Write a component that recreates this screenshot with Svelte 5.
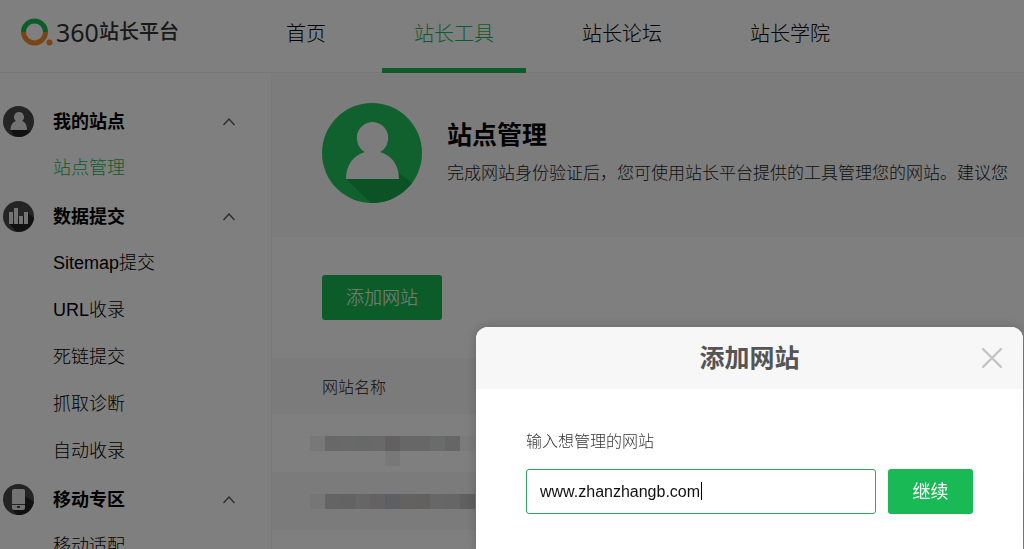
<script>
  let site = $state('www.zhanzhangb.com');
  let showDialog = $state(true);

  const tabs = [
    { label: '首页' },
    { label: '站长工具', active: true },
    { label: '站长论坛' },
    { label: '站长学院' },
  ];

  const menu = [
    { title: '我的站点', icon: 'user', items: [{ label: '站点管理', active: true }] },
    {
      title: '数据提交',
      icon: 'chart',
      items: [
        { label: 'Sitemap提交' },
        { label: 'URL收录' },
        { label: '死链提交' },
        { label: '抓取诊断' },
        { label: '自动收录' },
      ],
    },
    { title: '移动专区', icon: 'phone', items: [{ label: '移动适配' }] },
  ];

  // masked site names, one shade per block
  const masks = [
    ['#f0f0f0', '#d0d0d0', '#d2d2d2', '#ced2d2', '#d2d2d2', '#c4c0c2', '#cecece', '#cecece', '#d4d6d6', '#cccccc', '#f6f6f6'],
    ['#ececec', '#c8c8c8', '#c6c6c6', '#cccccc', '#c8c4c4', '#bcbec4', '#c6c4c2', '#c4c2be', '#cecece', '#cccccc', '#c0c0c0'],
  ];
</script>

<div class="page">
  <header>
    <a class="logo" href="#home">
      <svg width="33" height="30" viewBox="0 0 33 30" aria-hidden="true">
        <path d="M3.500 15a11 11 0 0 1 22 0" fill="none" stroke="#19b955" stroke-width="5" />
        <path d="M3.500 15a11 11 0 0 0 22 0" fill="none" stroke="#f08a2c" stroke-width="5" />
        <circle cx="29.500" cy="25.500" r="3" fill="#f08a2c" />
      </svg>
      <span class="num">360</span><span class="name">站长平台</span>
    </a>
    <nav>
      {#each tabs as tab}
        <a href="#tab" class:active={tab.active}>{tab.label}</a>
      {/each}
    </nav>
  </header>

  <div class="body">
    <aside>
      {#each menu as group}
        <section>
          <button class="group">
            <svg class="icon" width="31" height="31" viewBox="0 0 31 31" aria-hidden="true">
              <circle cx="15.500" cy="15.500" r="15.500" fill="#484848" />
              {#if group.icon === 'user'}
                <path d="M7.500 24h17l3.500 1a15.500 15.500 0 0 1-17 5z" fill="#222" />
                <path d="M16 6a5 5 0 0 1 3 9c3.500 1 5 4.500 5 9H7.500c0-4.500 2-8 5.500-9a5 5 0 0 1 3-9z" fill="#e6e6e6" />
              {:else if group.icon === 'chart'}
                <path d="M6.500 23 25 12l6 5a15.500 15.500 0 0 1-18 13.500z" fill="#222" />
                <path d="M6 11h4v12H6zM11 7h4v16h-4zM16 15h4v8h-4zM21 11h4v12h-4z" fill="#e6e6e6" />
              {:else}
                <path d="m22 12 9 6a15.500 15.500 0 0 1-17 13l-4-5z" fill="#222" />
                <rect x="9" y="5" width="13" height="21" rx="2" fill="#e6e6e6" />
                <path d="M9 20.500h13" stroke="#484848" />
                <rect x="14" y="22" width="3" height="2" fill="#484848" />
              {/if}
            </svg>
            <span>{group.title}</span>
            <svg class="arrow" width="12" height="8" viewBox="0 0 12 8" aria-hidden="true">
              <path d="m.5 7 5.500-6 5.500 6" fill="none" stroke="#555" stroke-width="1.300" />
            </svg>
          </button>
          {#each group.items as item}
            <a href="#menu" class:active={item.active}>{item.label}</a>
          {/each}
        </section>
      {/each}
    </aside>

    <main>
      <div class="hero">
        <svg width="100" height="100" viewBox="0 0 100 100" aria-hidden="true">
          <defs>
            <clipPath id="disc"><circle cx="50" cy="50" r="50" /></clipPath>
          </defs>
          <g clip-path="url(#disc)">
            <rect width="100" height="100" fill="#20c25c" />
            <path d="M24 76 50 101h50V88L77 70z" fill="#17a44b" />
          </g>
          <path d="M50.500 19a16 16 0 0 1 7.500 30c11 3 19 12 19 27H24c0-15 8-24 19-27a16 16 0 0 1 7.500-30z" fill="#f8f8f8" />
        </svg>
        <div class="intro">
          <h1>站点管理</h1>
          <p>完成网站身份验证后，您可使用站长平台提供的工具管理您的网站。建议您</p>
        </div>
      </div>

      <button class="btn add" onclick={() => (showDialog = true)}>添加网站</button>

      <table>
        <thead>
          <tr><th>网站名称</th></tr>
        </thead>
        <tbody>
          {#each masks as mask}
            <tr>
              <td>
                <div class="mask">
                  {#each mask as shade}
                    <i style:background={shade}></i>
                  {/each}
                </div>
              </td>
            </tr>
          {/each}
          <tr><td></td></tr>
        </tbody>
      </table>
    </main>
  </div>
</div>

{#if showDialog}
  <div class="overlay">
    <div class="dialog" role="dialog" aria-labelledby="dialog-title">
      <div class="dialog-head">
        <h2 id="dialog-title">添加网站</h2>
        <button class="close" aria-label="关闭" onclick={() => (showDialog = false)}>
          <svg width="22" height="22" viewBox="0 0 22 22" aria-hidden="true">
            <path d="m2 2 18 18M20 2 2 20" stroke="#c4c4c4" stroke-width="2.400" stroke-linecap="round" />
          </svg>
        </button>
      </div>
      <form onsubmit={(e) => e.preventDefault()}>
        <label for="site">输入想管理的网站</label>
        <div class="row">
          <div class="field">
            <input id="site" type="text" bind:value={site} />
            <span class="caret"></span>
          </div>
          <button class="btn next">继续</button>
        </div>
      </form>
    </div>
  </div>
{/if}

<style>
  :global(body) {
    overflow: hidden;
    font-family: "Liberation Sans", "Noto Sans CJK SC", sans-serif;
    background: #fff;
    color: #000;
  }

  a { color: inherit; text-decoration: none; }

  button, input { font-family: inherit; }

  button {
    border: none;
    background: none;
    padding: 0;
    color: inherit;
    cursor: pointer;
  }

  .page {
    height: 100vh;
    overflow: hidden;
  }

  header {
    display: flex;
    height: 72px;
    border-bottom: 1px solid #f0f0f0;
  }

  .logo {
    display: flex;
    align-items: center;
    box-sizing: border-box;
    width: 254px;
    padding: 0 0 8px 20px;
    color: #333;
  }

  .logo .num {
    margin-left: 3px;
    font: 25px/30px "Noto Sans", sans-serif;
  }

  .logo .name { font-size: 20px; font-weight: 500; line-height: 32px; }

  nav { display: flex; gap: 24px; }

  nav a {
    padding: 0 32px;
    font-size: 20px;
    font-weight: 300;
    line-height: 68px;
    white-space: nowrap;
  }

  nav a.active {
    height: 68px;
    border-bottom: 5px solid #19b955;
    color: #19b955;
  }

  .body { display: flex; }

  aside {
    flex: none;
    width: 271px;
    padding-top: 25px;
    border-right: 1px solid #f6f6f6;
  }

  section { margin-bottom: 1px; }

  .group {
    display: flex;
    align-items: center;
    width: 100%;
    height: 47px;
    padding: 0 36px 0 3px;
    font-size: 18px;
    font-weight: 700;
  }

  .group span { padding-bottom: 4px; }

  .group .icon { margin-right: 19px; }

  .group .arrow { margin-left: auto; }

  section a {
    display: block;
    padding-left: 53px;
    font-size: 18px;
    font-weight: 300;
    line-height: 47px;
  }

  section a.active { color: #19b955; }

  main { flex: 1; min-width: 0; }

  .hero {
    display: flex;
    align-items: center;
    gap: 25px;
    padding: 30px 0 34px 50px;
    background: #f8f8f8;
    overflow: hidden;
  }

  .hero svg { flex: none; }

  h1 {
    margin: 0;
    font-size: 25px;
    line-height: 42px;
  }

  .intro p {
    margin: 0;
    font-size: 17px;
    font-weight: 300;
    line-height: 36px;
    white-space: nowrap;
    color: #222;
  }

  .btn {
    height: 45px;
    padding-bottom: 4px;
    border-radius: 3px;
    background: #19b955;
    color: #fff;
    font-size: 18px;
  }

  .add { width: 120px; margin: 38px 50px; font-weight: 300; }

  table {
    width: 100%;
    border-collapse: collapse;
  }

  th, td { height: 58px; padding: 0 0 0 50px; }

  th {
    height: 56px;
    background: #f6f6f6;
    color: #222;
    font-size: 16px;
    font-weight: 300;
    text-align: left;
  }

  tbody tr:nth-child(even) { background: #f6f6f6; }

  .mask { display: flex; margin-left: -12px; }

  .mask i { width: 15px; height: 15px; }

  tbody tr:first-child i:nth-child(6) { box-shadow: 0 15px #f0f0f0; }

  .overlay {
    position: fixed;
    inset: 0;
    display: flex;
    justify-content: flex-end;
    padding: 327px 1px 0 0;
    background: rgba(0, 0, 0, 0.5);
  }

  .dialog {
    width: 100%;
    max-width: 547px;
    border-radius: 12px 12px 0 0;
    background: #fff;
    box-shadow: 0 0 12px rgba(0, 0, 0, 0.2);
    overflow: hidden;
  }

  .dialog-head {
    display: flex;
    align-items: center;
    height: 62px;
    padding: 0 20px 0 42px;
    background: #f7f7f7;
  }

  h2 {
    flex: 1;
    margin: 0;
    padding-bottom: 4px;
    color: #555;
    font-size: 25px;
    text-align: center;
  }

  .close { height: 22px; }

  .close svg { display: block; }

  form { padding: 41px 50px; }

  label {
    display: block;
    margin-bottom: 15px;
    color: #333;
    font-size: 16px;
    font-weight: 300;
    line-height: 24px;
  }

  .row { display: flex; gap: 12px; }

  .field { position: relative; flex: 1; }

  input {
    box-sizing: border-box;
    width: 100%;
    height: 45px;
    padding: 0 13px;
    border: 1px solid #2fa564;
    border-radius: 3px;
    outline: none;
    color: #111;
    font-size: 16px;
  }

  .caret {
    position: absolute;
    top: 13px;
    left: 175px;
    width: 1px;
    height: 18px;
    background: #000;
  }

  .next { width: 85px; }
</style>
